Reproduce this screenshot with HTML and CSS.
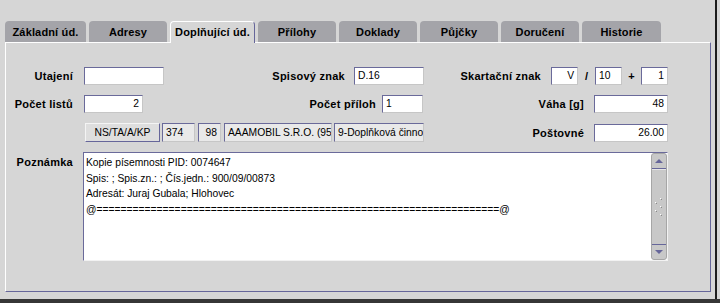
FILE: index.html
```html
<!DOCTYPE html>
<html lang="cs">
<head>
  <meta charset="UTF-8">
  <title>Doplňující údaje</title>
  <link rel="stylesheet" href="styles.css">
</head>
<body>
  <div class="screen">
    <div class="window">
      <!-- záložky -->
      <div class="tabs">
        <div class="tab tab-first">Základní úd.</div>
        <div class="tab">Adresy</div>
        <div class="tab active">Doplňující úd.</div>
        <div class="tab">Přílohy</div>
        <div class="tab">Doklady</div>
        <div class="tab">Půjčky</div>
        <div class="tab">Doručení</div>
        <div class="tab tab-last">Historie</div>
      </div>

      <div class="panel">
        <div class="row">
          <span class="lbl lbl-left">Utajení</span>
          <div class="field f-utajeni"></div>
          <span class="lbl lbl-spis">Spisový znak</span>
          <div class="field f-spis">D.16</div>
          <span class="lbl lbl-skart">Skartační znak</span>
          <div class="field num f-small f-v">V</div>
          <span class="sep sep-slash">/</span>
          <div class="field f-small">10</div>
          <span class="sep sep-plus">+</span>
          <div class="field num f-small">1</div>
        </div>

        <div class="row">
          <span class="lbl lbl-left">Počet listů</span>
          <div class="field num f-listy">2</div>
          <span class="lbl lbl-prilohy">Počet příloh</span>
          <div class="field f-prilohy">1</div>
          <span class="lbl lbl-vaha">Váha [g]</span>
          <div class="field num f-vaha">48</div>
        </div>

        <div class="row row-3">
          <div class="btn">NS/TA/A/KP</div>
          <div class="field off f-374">374</div>
          <div class="field off num f-98">98</div>
          <div class="field off f-firma">AAAMOBIL S.R.O. (95</div>
          <div class="field off f-cinnost">9-Doplňková činnost</div>
          <span class="lbl lbl-post">Poštovné</span>
          <div class="field num f-vaha">26.00</div>
        </div>

        <div class="row row-4">
          <span class="lbl lbl-left lbl-note">Poznámka</span>
          <div class="note">
            <div class="note-text">
              <div>Kopie písemnosti PID: 0074647</div>
              <div>Spis: ; Spis.zn.: ; Čís.jedn.: 900/09/00873</div>
              <div>Adresát: Juraj Gubala; Hlohovec</div>
              <div>@===================================================================@</div>
            </div>
            <div class="scroll">
              <div class="scroll-btn up"><span class="arrow-up"></span></div>
              <div class="scroll-track">
                <svg width="8" height="18" viewBox="0 0 8 18">
                  <rect x="5" y="0" width="1" height="1" fill="#fff"/><rect x="6" y="1" width="1" height="1" fill="#8a8a8a"/>
                  <rect x="0" y="4" width="1" height="1" fill="#fff"/><rect x="1" y="5" width="1" height="1" fill="#8a8a8a"/>
                  <rect x="5" y="8" width="1" height="1" fill="#fff"/><rect x="6" y="9" width="1" height="1" fill="#8a8a8a"/>
                  <rect x="0" y="12" width="1" height="1" fill="#fff"/><rect x="1" y="13" width="1" height="1" fill="#8a8a8a"/>
                  <rect x="5" y="16" width="1" height="1" fill="#fff"/><rect x="6" y="17" width="1" height="1" fill="#8a8a8a"/>
                </svg>
              </div>
              <div class="scroll-btn down"><span class="arrow-down"></span></div>
            </div>
          </div>
        </div>
      </div>
    </div>
  </div>
</body>
</html>
```

FILE: styles.css
```css
* {
  margin: 0;
  padding: 0;
  box-sizing: border-box;
}

body {
  font-family: "Liberation Sans", Arial, sans-serif;
  background-color: #d6d6d6;
  color: #000;
}

.screen {
  width: 720px;
  height: 303px;
  border-bottom: 4px solid #363636;
}

.window {
  width: 717px;
  height: 299px;
  border-right: 2px solid #1c1c1c;
  padding: 21px 0 0 5px;
}

/* záložky */
.tabs {
  display: flex;
  gap: 3px;
  height: 21px;
  position: relative;
  z-index: 1;
}

.tab {
  width: 78px;
  height: 21px;
  background-color: #a4a4a9;
  border-radius: 4px 4px 0 0;
  font-size: 11px;
  font-weight: bold;
  letter-spacing: 0.15px;
  text-align: center;
  line-height: 20px;
  padding-top: 1px;
  white-space: nowrap;
}

.tab-first {
  width: 81px;
}

.tab-last {
  width: 79px;
}

.tab.active {
  width: 85px;
  height: 22px;
  background-color: #d6d6d6;
  border-top: 1px solid #fff;
  border-left: 1px solid #fff;
  border-right: 1px solid #66669a;
  line-height: 19px;
}

.panel {
  width: 706px;
  height: 250px;
  border-top: 1px solid #fff;
  border-left: 1px solid #fff;
  border-right: 1px solid #66669a;
  border-bottom: 1px solid #66669a;
  padding-top: 24px;
}

/* řádky formuláře */
.row {
  display: flex;
  align-items: center;
  height: 18px;
  margin-bottom: 10px;
}

.row-3 {
  height: 19px;
}

.row-4 {
  align-items: flex-start;
  height: 109px;
}

.lbl {
  flex: none;
  font-size: 11px;
  font-weight: bold;
  letter-spacing: 0.25px;
  text-align: right;
  white-space: nowrap;
}

.lbl-left { width: 67px; }
.lbl-spis { width: 181px; }
.lbl-skart { width: 117px; }
.lbl-prilohy { width: 233px; }
.lbl-vaha { width: 161px; }
.lbl-post { width: 160px; }

.lbl-note {
  padding-top: 4px;
}

.sep {
  flex: none;
  font-size: 11px;
  font-weight: bold;
  text-align: center;
}

.sep-slash { width: 17px; }
.sep-plus { width: 19px; }

.field {
  flex: none;
  height: 18px;
  background-color: #fff;
  border: 1px solid;
  border-color: #6a6a9a #c6c6c6 #c6c6c6 #6a6a9a;
  font-size: 10.3px;
  line-height: 16px;
  padding: 0 3px;
  overflow: hidden;
  white-space: nowrap;
}

.field.num {
  text-align: right;
}

.field.off {
  height: 19px;
  line-height: 17px;
  background-color: #e9e9e9;
}

.f-utajeni { width: 80px; margin-left: 11px; }
.f-spis { width: 70px; margin-left: 9px; }
.f-small { width: 27px; }
.f-v { margin-left: 10px; }
.f-listy { width: 59px; margin-left: 11px; }
.f-prilohy { width: 41px; margin-left: 6px; }
.f-vaha { width: 74px; margin-left: 10px; }
.f-374 { width: 33px; margin-left: 2px; }
.f-98 { width: 23px; margin-left: 3px; }
.f-firma { width: 108px; margin-left: 3px; }
.f-cinnost { width: 90px; margin-left: 2px; }

.btn {
  flex: none;
  width: 75px;
  height: 19px;
  margin-left: 79px;
  background-color: #dedede;
  border: 1px solid;
  border-color: #f4f4f4 #66669a #66669a #f4f4f4;
  font-size: 10.3px;
  line-height: 17px;
  text-align: center;
}

/* poznámka */
.note {
  flex: none;
  display: flex;
  width: 585px;
  height: 109px;
  margin-left: 10px;
  background-color: #fff;
  border: 1px solid;
  border-color: #6a6a9a #f2f2f2 #f2f2f2 #6a6a9a;
}

.note-text {
  flex: 1;
  padding: 2px 2px 0;
  font-size: 10.3px;
  line-height: 15.5px;
  white-space: nowrap;
  overflow: hidden;
}

.scroll {
  flex: none;
  display: flex;
  flex-direction: column;
  width: 16px;
  background-color: #c8c8c8;
  border: 1px solid #a6a6a6;
  border-radius: 3px;
}

.scroll-btn {
  height: 15px;
  display: flex;
  align-items: center;
  justify-content: center;
}

.scroll-btn.up {
  border-bottom: 1px solid #66669a;
}

.scroll-btn.down {
  border-top: 1px solid #66669a;
}

.arrow-up {
  border-left: 4px solid transparent;
  border-right: 4px solid transparent;
  border-bottom: 4px solid #66669a;
}

.arrow-down {
  border-left: 4px solid transparent;
  border-right: 4px solid transparent;
  border-top: 4px solid #66669a;
}

.scroll-track {
  flex: 1;
  display: flex;
  align-items: center;
  justify-content: center;
  border-top: 1px solid #e6e6e6;
}
```
